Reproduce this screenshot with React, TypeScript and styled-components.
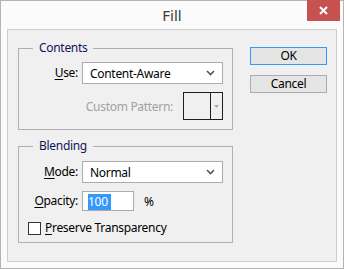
import React from 'react';
import styled, { createGlobalStyle } from 'styled-components';

const GlobalStyle = createGlobalStyle`
  html, body {
    margin: 0;
    padding: 0;
    overflow: hidden;
    background: #ffffff;
  }
  * {
    box-sizing: border-box;
  }
`;

const Window = styled.div`
  width: 344px;
  height: 269px;
  display: flex;
  flex-direction: column;
  background: #fbfbfb;
  border: 1px solid #b4b4b4;
  padding: 0 6px 6px 6px;
  font-family: 'Noto Sans', 'Liberation Sans', sans-serif;
  font-size: 12px;
  letter-spacing: -0.3px;
  color: #000;
`;

const TitleBar = styled.div`
  height: 29px;
  flex-shrink: 0;
  display: grid;
  grid-template-columns: 1fr auto 1fr;
  margin: -1px -3px 0 -3px;
`;

const Title = styled.div`
  align-self: center;
  font-size: 15px;
  letter-spacing: 0;
  color: #3a3a3a;
  padding-top: 1px;
`;

const CloseButton = styled.div`
  justify-self: end;
  align-self: start;
  width: 33px;
  height: 21px;
  background: #c75050;
  display: flex;
  align-items: center;
  justify-content: center;
`;

const Client = styled.div`
  flex: 1;
  display: flex;
  align-items: flex-start;
  background: #f0f0f0;
  border: 1px solid #cdcdcd;
  padding: 10px 0 0 10px;
`;

const GroupColumn = styled.div`
  width: 215px;
  display: flex;
  flex-direction: column;
  gap: 8px;
`;

const Group = styled.fieldset<{ $top: number; $bottom: number }>`
  margin: 0;
  border: 1px solid #b0b0b0;
  padding: ${(p) => p.$top}px 9px ${(p) => p.$bottom}px 14px;
  display: flex;
  flex-direction: column;
  min-width: 0;
`;

const Legend = styled.legend`
  padding: 0 6px 0 6px;
  margin-left: 0;
  line-height: 16px;
  color: #14145a;
`;

const FieldRow = styled.div<{ $gap?: number }>`
  display: grid;
  grid-template-columns: 45px 1fr;
  column-gap: 4px;
  align-items: center;
  margin-bottom: ${(p) => p.$gap ?? 0}px;
`;

const Label = styled.span`
  text-align: right;
  white-space: nowrap;
  line-height: 16px;
`;

const Key = styled.span`
  text-decoration: underline;
  text-underline-offset: 2px;
`;

const Select = styled.div<{ $height: number }>`
  height: ${(p) => p.$height}px;
  background: #fff;
  border: 1px solid #acacac;
  display: flex;
  align-items: center;
  justify-content: space-between;
  padding: 0 7px 0 7px;
  white-space: nowrap;
`;

const PatternRow = styled.div`
  display: flex;
  justify-content: flex-end;
  align-items: center;
  gap: 10px;
`;

const DisabledLabel = styled.span`
  color: #a2a2a2;
  white-space: nowrap;
`;

const PatternPicker = styled.div`
  width: 40px;
  height: 28px;
  border: 1px solid #1e1e1e;
  display: grid;
  grid-template-columns: 26px 1fr;
  background: #f0f0f0;
`;

const PatternArrow = styled.div`
  border-left: 1px solid #1e1e1e;
  display: flex;
  align-items: center;
  justify-content: center;
`;

const InputRow = styled.div`
  display: flex;
  align-items: center;
  gap: 10px;
`;

const TextInput = styled.div`
  width: 52px;
  height: 20px;
  background: #fff;
  border: 1px solid #acacac;
  padding: 1px 0 0 5px;
  display: flex;
  align-items: center;
`;

const Selected = styled.span`
  background: #3399ff;
  color: #fff;
  line-height: 16px;
  padding-right: 3px;
`;

const CheckRow = styled.label`
  display: flex;
  align-items: center;
  gap: 4px;
  margin-left: -5px;
  line-height: 16px;
`;

const CheckBox = styled.span`
  width: 13px;
  height: 13px;
  background: #fff;
  border: 1px solid #333;
`;

const ButtonColumn = styled.div`
  margin: 7px 0 0 17px;
  display: flex;
  flex-direction: column;
  gap: 10px;
`;

const Button = styled.div<{ $default?: boolean }>`
  width: 77px;
  height: 18px;
  display: flex;
  align-items: center;
  justify-content: center;
  background: #e5e5e5;
  border: 1px solid ${(p) => (p.$default ? '#3399ff' : '#adadad')};
  line-height: 16px;
`;

const Chevron = () => (
  <svg width="9" height="6" viewBox="0 0 9 6">
    <path d="M1 1 L4.5 4.5 L8 1" fill="none" stroke="#555" strokeWidth="1.6" />
  </svg>
);

export default function App() {
  return (
    <>
      <GlobalStyle />
      <Window>
        <TitleBar>
          <span />
          <Title>Fill</Title>
          <CloseButton>
            <svg width="9" height="9" viewBox="0 0 9 9">
              <path d="M1 1 L8 8 M8 1 L1 8" stroke="#fff" strokeWidth="2" />
            </svg>
          </CloseButton>
        </TitleBar>
        <Client>
          <GroupColumn>
            <Group $top={6} $bottom={9}>
              <Legend>Contents</Legend>
              <FieldRow $gap={8}>
                <Label>
                  <Key>U</Key>se:
                </Label>
                <Select $height={22}>
                  Content-Aware
                  <Chevron />
                </Select>
              </FieldRow>
              <PatternRow>
                <DisabledLabel>Custom Pattern:</DisabledLabel>
                <PatternPicker>
                  <span />
                  <PatternArrow>
                    <svg width="5" height="3" viewBox="0 0 5 3">
                      <path d="M0 0 L5 0 L2.5 3 Z" fill="#a8a8a8" />
                    </svg>
                  </PatternArrow>
                </PatternPicker>
              </PatternRow>
            </Group>
            <Group $top={7} $bottom={6}>
              <Legend>Blending</Legend>
              <FieldRow $gap={8}>
                <Label>
                  <Key>M</Key>ode:
                </Label>
                <Select $height={22}>
                  Normal
                  <Chevron />
                </Select>
              </FieldRow>
              <FieldRow $gap={9}>
                <Label>
                  <Key>O</Key>pacity:
                </Label>
                <InputRow>
                  <TextInput>
                    <Selected>100</Selected>
                  </TextInput>
                  %
                </InputRow>
              </FieldRow>
              <CheckRow>
                <CheckBox />
                <span>
                  <Key>P</Key>reserve Transparency
                </span>
              </CheckRow>
            </Group>
          </GroupColumn>
          <ButtonColumn>
            <Button $default>OK</Button>
            <Button>Cancel</Button>
          </ButtonColumn>
        </Client>
      </Window>
    </>
  );
}
